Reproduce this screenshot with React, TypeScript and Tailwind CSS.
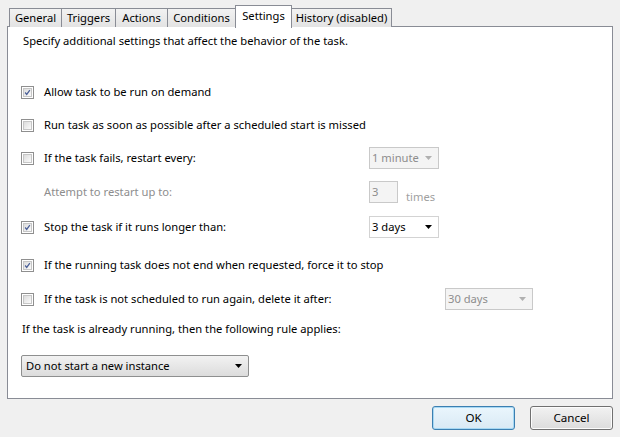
import React from 'react';

const font = { fontFamily: '"Segoe UI", "Noto Sans", "Liberation Sans", sans-serif' };

const CheckBox = ({ checked }: { checked?: boolean }) => (
  <div className="w-[13px] h-[13px] shrink-0 border border-[#8f8f8f] bg-white p-[1px]">
    <div className="w-full h-full border border-[#c6c6c6] bg-gradient-to-br from-[#dcdcdc] to-[#fbfbfb] flex items-center justify-center">
      {checked && (
        <svg width="9" height="9" viewBox="0 0 9 9">
          <path d="M1.5 4.5 L3.5 7 L7.5 1.5" fill="none" stroke="#4a5f97" strokeWidth="1.6" />
        </svg>
      )}
    </div>
  </div>
);

const Combo = ({
  value,
  width,
  disabled,
}: {
  value: string;
  width: string;
  disabled?: boolean;
}) => (
  <div
    className={`${width} h-[22px] flex items-center justify-between pl-[2px] pr-[6px] border ${
      disabled ? 'border-[#c9c9c9] bg-[#f4f4f4] text-[#8d8d8d]' : 'border-[#d3d3d3] bg-white text-black'
    }`}
  >
    <span>{value}</span>
    <svg width="7" height="4" viewBox="0 0 7 4">
      <path d="M0 0 H7 L3.5 4 Z" fill={disabled ? '#b0b0b0' : '#000'} />
    </svg>
  </div>
);

const Row = ({
  checked,
  label,
  labelWidth = 'w-[325px]',
  mt,
  children,
}: {
  checked?: boolean;
  label: string;
  labelWidth?: string;
  mt: string;
  children?: React.ReactNode;
}) => (
  <div className={`flex items-center h-6 ${mt}`}>
    <CheckBox checked={checked} />
    <span className={`ml-[10px] ${children ? labelWidth : ''} shrink-0 whitespace-nowrap`}>{label}</span>
    {children}
  </div>
);

const tabs = ['General', 'Triggers', 'Actions', 'Conditions', 'Settings', 'History (disabled)'];
const tabWidths = ['w-[53px]', 'w-[55px]', 'w-[53px]', 'w-[69px]', 'w-[57px]', 'w-[101px]'];

export default function App() {
  return (
    <div className="w-[620px] h-[437px] bg-[#f0f0f0] text-[11.2px] text-black overflow-hidden flex flex-col" style={font}>
      {/* Tabs */}
      <div className="flex items-end h-[27px] pl-[9px] relative z-10">
        {tabs.map((t, i) =>
          t === 'Settings' ? (
            <div
              key={t}
              className={`${tabWidths[i]} h-[23px] -mb-px -mx-px bg-white border border-b-0 border-[#898c95] flex items-start justify-center pt-[2px]`}
            >
              {t}
            </div>
          ) : (
            <div
              key={t}
              className={`${tabWidths[i]} h-[19px] border border-b-0 border-[#898c95] bg-gradient-to-b from-[#f2f2f2] to-[#e3e3e3] flex items-center justify-center ${
                i > 0 && tabs[i - 1] !== 'Settings' ? '-ml-px' : ''
              }`}
            >
              {t}
            </div>
          )
        )}
      </div>

      {/* Panel */}
      <div className="ml-[7px] w-[606px] h-[373px] border border-[#898c95] bg-white pl-[13px] -mt-px">
        <div className="h-[28px] flex items-center pl-[2px]">Specify additional settings that affect the behavior of the task.</div>

        <Row checked label="Allow task to be run on demand" mt="mt-[25px]" />
        <Row label="Run task as soon as possible after a scheduled start is missed" mt="mt-[9px]" />
        <Row label="If the task fails, restart every:" mt="mt-[9px]">
          <Combo value="1 minute" width="w-[70px]" disabled />
        </Row>
        <div className="flex items-center h-6 mt-[10px]">
          <span className="ml-[23px] w-[325px] shrink-0 text-[#8d8d8d]">Attempt to restart up to:</span>
          <div className="w-[29px] h-[22px] border border-[#c9c9c9] bg-[#f4f4f4] text-[#8d8d8d] pl-[2px] flex items-center">3</div>
          <span className="ml-[8px] mt-[10px] text-[#a0a0a0]">times</span>
        </div>
        <Row checked label="Stop the task if it runs longer than:" mt="mt-[11px]">
          <Combo value="3 days" width="w-[70px]" />
        </Row>
        <Row checked label="If the running task does not end when requested, force it to stop" mt="mt-[14px]" />
        <Row label="If the task is not scheduled to run again, delete it after:" labelWidth="w-[401px]" mt="mt-[10px]">
          <Combo value="30 days" width="w-[88px]" disabled />
        </Row>
        <div className="h-6 flex items-center mt-[6px] pl-[1px] whitespace-nowrap">If the task is already running, then the following rule applies:</div>
        <div className="mt-[14px] w-[228px] h-[22px] border border-[#8e8f8f] rounded-[2px] bg-gradient-to-b from-[#f2f2f2] to-[#dcdcdc] flex items-center justify-between pl-[4px] pr-[6px]">
          <span>Do not start a new instance</span>
          <svg width="7" height="4" viewBox="0 0 7 4">
            <path d="M0 0 H7 L3.5 4 Z" fill="#000" />
          </svg>
        </div>
      </div>

      {/* Buttons */}
      <div className="flex justify-end gap-[15px] pr-[7px] mt-[7px] text-[11.6px]">
        <button className="w-[83px] h-[24px] rounded-[3px] border border-[#3c7fb1] bg-gradient-to-b from-[#eaf6fd] to-[#d9e9f4] shadow-[inset_0_0_0_1px_#a7d8f3]">
          OK
        </button>
        <button className="w-[83px] h-[24px] rounded-[3px] border border-[#707070] bg-gradient-to-b from-[#f2f2f2] to-[#dcdcdc] shadow-[inset_0_0_0_1px_#fcfcfc]">
          Cancel
        </button>
      </div>
    </div>
  );
}
